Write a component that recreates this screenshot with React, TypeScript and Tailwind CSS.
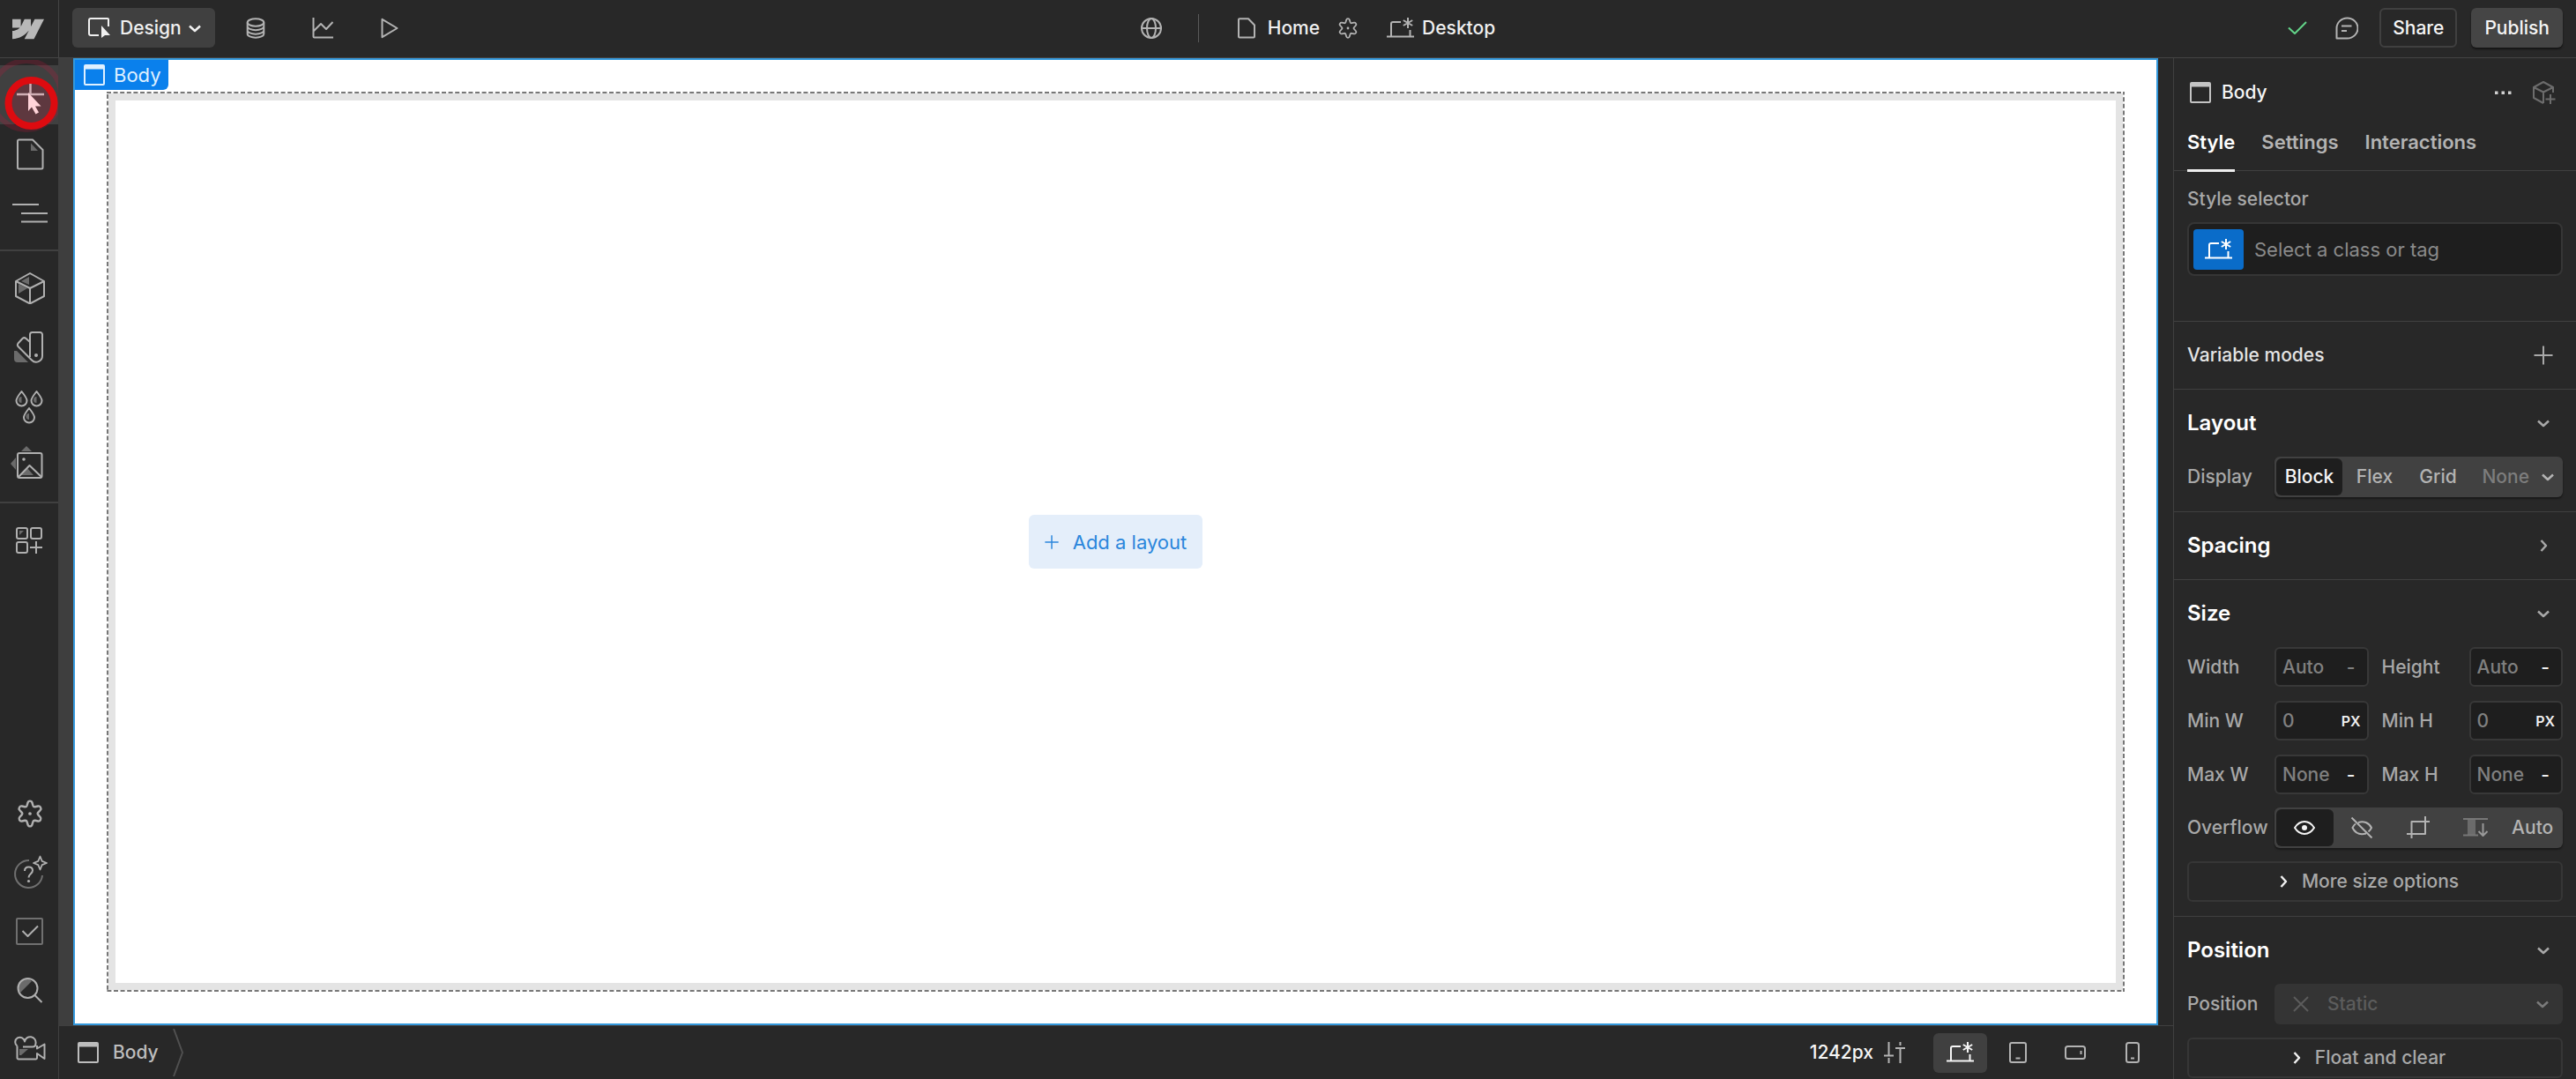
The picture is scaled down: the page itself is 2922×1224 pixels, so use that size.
import { useState } from "react";
import type { ReactNode } from "react";

type IconProps = { className?: string };

function Svg({ box, className, children }: { box: string; className: string; children: ReactNode }) {
  return (
    <svg
      viewBox={box}
      className={`shrink-0 ${className}`}
      fill="none"
      stroke="currentColor"
      strokeWidth={2}
      strokeLinejoin="round"
      aria-hidden="true"
    >
      {children}
    </svg>
  );
}

const LogoIcon = () => (
  <svg viewBox="0 0 24 24" className="h-9 w-9" fill="currentColor" aria-hidden="true">
    <path d="m24 4.515-7.658 14.97H9.149l3.205-6.204h-.144C9.566 16.713 5.621 18.973 0 19.485v-6.118s3.596-.213 5.71-2.435H0V4.515h6.417v5.278l.144-.001 2.622-5.277h4.854v5.244h.144l2.72-5.244H24Z" />
  </svg>
);

const DesignIcon = () => (
  <Svg box="0 0 26 24" className="h-6 w-[26px]">
    <path d="M12 20H3a2 2 0 0 1-2-2V3a2 2 0 0 1 2-2h19a1 1 0 0 1 1 1v8" />
    <path d="M15 9v14l4-3h6z" fill="currentColor" stroke="none" />
  </Svg>
);

const ChevronDown = ({ className = "" }: IconProps) => (
  <Svg box="0 0 14 14" className={`h-3.5 w-3.5 ${className}`}>
    <path d="M1 4.5 7 10l6-5.5" strokeWidth={2.5} />
  </Svg>
);

const ChevronRight = ({ className = "" }: IconProps) => (
  <Svg box="0 0 14 14" className={`h-3.5 w-3.5 ${className}`}>
    <path d="m4.5 1 5.5 6-5.5 6" strokeWidth={2.5} />
  </Svg>
);

const DatabaseIcon = () => (
  <Svg box="0 0 22 24" className="h-6 w-[22px]">
    <ellipse cx="11" cy="5.5" rx="9.3" ry="4.2" />
    <path d="M1.7 5.5v13c0 2.3 4.2 4.2 9.3 4.2s9.3-1.9 9.3-4.2v-13M1.7 10c0 2.3 4.2 4.2 9.3 4.2s9.3-1.9 9.3-4.2M1.7 14.5c0 2.3 4.2 4.2 9.3 4.2s9.3-1.9 9.3-4.2" />
  </Svg>
);

const ChartIcon = () => (
  <Svg box="0 0 24 24" className="h-6 w-6">
    <path d="M1.5 0v21.5a1 1 0 0 0 1 1H24M2 15l8-8 6 6 7.5-8" />
  </Svg>
);

const PlayIcon = () => (
  <Svg box="0 0 22 24" className="h-6 w-[22px]">
    <path d="M2.5 1.8v20.4l17-10.200z" />
  </Svg>
);

const GlobeIcon = () => (
  <Svg box="0 0 26 26" className="h-[26px] w-[26px]">
    <circle cx="13" cy="13" r="11" />
    <ellipse cx="13" cy="13" rx="5" ry="11" />
    <path d="M2 13h22" />
  </Svg>
);

const PageIcon = () => (
  <Svg box="0 0 20 24" className="h-6 w-5">
    <path d="M2 1.2h10l7 7.3v13a1 1 0 0 1-1 1H2a1 1 0 0 1-1-1V2.2a1 1 0 0 1 1-1z" />
  </Svg>
);

const GearIcon = ({ className = "" }: IconProps) => (
  <Svg box="0 0 24 24" className={className}>
    <path
      d="M10.2 2.6Q10.500 1.200 12 1.200t1.800 1.400l.8 2.600q.4 1.200 1.700 1l2.600-.6q1.300-.3 2.100 1t-.2 2.400l-1.800 2q-.9 1 0 2l1.800 2q1 1.100.2 2.400t-2.100 1l-2.600-.6q-1.300-.2-1.700 1l-.8 2.600Q13.500 22.800 12 22.800t-1.800-1.400l-.8-2.600q-.4-1.200-1.700-1l-2.600.6q-1.300.3-2.100-1t.2-2.400l1.800-2q.9-1 0-2l-1.800-2q-1-1.100-.2-2.400t2.100-1l2.600.6q1.300.2 1.700-1z"
      strokeWidth={1.8}
    />
    <circle cx="12" cy="12" r="1.400" fill="currentColor" stroke="none" />
  </Svg>
);

const BreakpointIcon = ({ className = "" }: IconProps) => (
  <Svg box="0 0 32 24" className={`h-6 w-8 ${className}`}>
    <path d="M0 21.5h31M5 21V7a2 2 0 0 1 2-2h9M26.500 14v7" />
    <path d="M24 0v12M18.800 3l10.400 6M29.200 3 18.800 9" />
  </Svg>
);

const CheckIcon = ({ className = "" }: IconProps) => (
  <Svg box="0 0 22 22" className={className}>
    <path d="m1 10.500 7 6.500L21 4" />
  </Svg>
);

const CommentIcon = () => (
  <Svg box="0 0 26 26" className="h-[26px] w-[26px]">
    <path d="M1.5 24.5V13A12 11.500 0 1 1 13.500 24.500z" />
    <path d="M7 10.5h11.5M7 16h6" />
  </Svg>
);

const BodyIcon = () => (
  <Svg box="0 0 24 24" className="h-6 w-6">
    <rect x="1" y="1" width="22" height="22" rx="1" />
    <path d="M1 1h22v4.500H1z" fill="currentColor" stroke="none" />
  </Svg>
);

const PagesIcon = () => (
  <Svg box="0 0 36 36" className="h-9 w-9">
    <path d="M19 5.500V14h8z" fill="#6b6b6b" stroke="none" />
    <path d="M5.500 1.500H21L32.500 13v20a1.500 1.500 0 0 1-1.500 1.500H5.500A1.500 1.500 0 0 1 4 33V3a1.500 1.500 0 0 1 1.500-1.500z" />
  </Svg>
);

const NavigatorIcon = () => (
  <Svg box="0 0 40 36" className="h-9 w-10">
    <path d="M0 8h30M10 18h30M10 27.500h30" />
  </Svg>
);

const CubeIcon = () => (
  <Svg box="0 0 36 36" className="h-9 w-9">
    <path d="M17 5v9L8 10zM5 13l10 5-10 6z" fill="#6b6b6b" stroke="none" />
    <path d="M18 1 34 10v17l-16 8.500L2 27V10zM2 10l16 8 16-8M18 18v17" />
  </Svg>
);

const SwatchIcon = () => (
  <Svg box="0 0 36 36" className="h-9 w-9">
    <path d="M0 22h3l13 13H4a4 4 0 0 1-4-4z" fill="#6b6b6b" stroke="none" />
    <path d="M18 3.500A2.500 2.500 0 0 1 20.500 1h9A2.500 2.500 0 0 1 32 3.500V27.500a7 7 0 0 1-12 5L4.500 17a3 3 0 0 1 0-3.500l5-5.500a3 3 0 0 1 4 0l4.500 4zM18 12v17" />
    <circle cx="25" cy="27" r="2" fill="currentColor" stroke="none" />
  </Svg>
);

const DropsIcon = () => (
  <Svg box="0 0 36 40" className="h-10 w-9">
    <path d="M8.500 3c4 5 6 7.500 6 10.500a6 6 0 0 1-12 0C2.500 10.500 4.500 8 8.500 3zM25.500 3c4 5 6 7.500 6 10.500a6 6 0 0 1-12 0c0-3 2-5.500 6-10.500zM17 22c4 5 6 7.500 6 10.500a6 6 0 0 1-12 0c0-3 2-5.500 6-10.500z" />
    <path d="M8.500 9v7a3 3 0 0 1 0-7zM25.500 9v7a3 3 0 0 1 0-7zM17 28v7a3 3 0 0 1 0-7z" fill="#6b6b6b" stroke="none" />
  </Svg>
);

const AssetsIcon = () => (
  <Svg box="3 3 42 40" className="h-10 w-[42px] overflow-visible">
    <path d="M14 7 20 1l6 6zM8 14v14l-6-7zM21 26l7 8H14z" fill="#6b6b6b" stroke="none" />
    <rect x="10" y="9" width="27.500" height="28" rx="2" />
    <path d="m11 36 12.500-13L37 36" />
    <circle cx="17" cy="16" r="1.800" fill="currentColor" stroke="none" />
  </Svg>
);

const AppsIcon = () => (
  <Svg box="0 0 36 36" className="h-9 w-9">
    <rect x="3" y="4" width="12" height="12" rx="2" />
    <rect x="19" y="4" width="12" height="12" rx="2" />
    <rect x="3" y="20" width="12" height="12" rx="2" />
    <path d="M25 19v14M18 26h14" />
    <path d="M6 7h5l-5 5z" fill="#6b6b6b" stroke="none" />
  </Svg>
);

const HelpIcon = () => (
  <Svg box="0 0 40 40" className="h-10 w-10">
    <path d="M19 6a15.500 15.500 0 1 0 15 17" stroke="#707070" />
    <path d="M14 18c0-3 2-4.500 4.500-4.500S23 15 23 17.500c0 3.500-4.500 4-4.500 8" />
    <circle cx="18.500" cy="29.500" r="1.600" fill="currentColor" stroke="none" />
    <path d="m31.500 1.500 2.200 5.300L39 9l-5.300 2.200-2.200 5.300-2.200-5.300L24 9l5.300-2.200z" strokeWidth={1.8} />
  </Svg>
);

const AuditIcon = () => (
  <Svg box="0 0 36 36" className="h-9 w-9">
    <rect x="3" y="3" width="29" height="29" rx="1" stroke="#707070" />
    <path d="m9.500 17 6 6L27 11.500" />
  </Svg>
);

const SearchIcon = () => (
  <Svg box="0 0 36 36" className="h-9 w-9">
    <path d="M7 20 20 7a9 9 0 0 0-13 13z" fill="#6b6b6b" stroke="none" />
    <circle cx="15.500" cy="15" r="11" />
    <path d="m23.500 23 8 8" />
  </Svg>
);

const CameraIcon = () => (
  <Svg box="0 0 36 32" className="h-8 w-9">
    <path d="M6 15h10l-8 7H6z" fill="#6b6b6b" stroke="none" />
    <path d="M3.500 11.500v13.500a1.500 1.500 0 0 0 1.500 1.500h19.500a1.500 1.500 0 0 0 1.500-1.500v-5l8.500 6V9.500l-8.500 5v-3.500" />
    <path d="M3.500 11.500A5.400 5.400 0 1 1 12 6.500a6 6 0 1 1 12.500 2c0 2-1 4-3.500 4H10" />
  </Svg>
);

const MoreIcon = () => (
  <Svg box="0 0 24 24" className="h-6 w-6">
    <path d="M2 10.500h3.500V14H2zM9.500 10.500H13V14H9.500zM17 10.500h3.500V14H17z" fill="currentColor" stroke="none" />
  </Svg>
);

const CubePlusIcon = () => (
  <Svg box="0 0 28 28" className="h-7 w-7">
    <path d="M13 26 2 20V8l11-6 11 6v6M2 8l11 5.500L24 8M13 13.500V26M21 16v11M15.500 21.500h11" />
  </Svg>
);

const PlusIcon = ({ className = "" }: IconProps) => (
  <Svg box="0 0 22 22" className={className}>
    <path d="M11 .5v21M.5 11h21" />
  </Svg>
);

const EyeIcon = () => (
  <Svg box="0 0 26 24" className="h-6 w-[26px]">
    <path d="M2 12c3-4.800 6.500-7 11-7s8 2.200 11 7c-3 4.800-6.500 7-11 7S5 16.800 2 12z" />
    <circle cx="13" cy="12" r="3" fill="currentColor" stroke="none" />
  </Svg>
);

const EyeOffIcon = () => (
  <Svg box="0 0 26 24" className="h-6 w-[26px]">
    <path d="M9 6c6-2 12 0 15 6-1 2-2 3.500-3.500 4.500M18 18.500C11 20.500 5.500 18 2.500 12 3.500 10 4.500 8.500 6 7.500M1.500.5l23 23" />
  </Svg>
);

const CropIcon = () => (
  <Svg box="0 0 26 26" className="h-[26px] w-[26px]">
    <path d="M5.500 25V6H26M0 20h21V0" />
  </Svg>
);

const ScrollIcon = () => (
  <Svg box="0 0 28 24" className="h-6 w-7">
    <path d="M5 3h9v17H5z" fill="#6b6b6b" stroke="none" />
    <path d="M0 2h28M0 20.500h17" stroke="#777" />
    <path d="M22.500 7v14M17.500 16l5 5 5-5" stroke="#999" />
  </Svg>
);

const SlidersIcon = () => (
  <Svg box="0 0 24 24" className="h-6 w-6">
    <path d="M5.500 0v15M0 15.500h11M5.500 18v6M18.500 0v4M13 7h11M18.500 7v17" />
  </Svg>
);

const TabletIcon = () => (
  <Svg box="0 0 24 24" className="h-6 w-6">
    <rect x="3" y="1" width="18" height="22" rx="2" />
    <path d="M9.500 18.500h5" />
  </Svg>
);

const LandscapeIcon = () => (
  <Svg box="0 0 24 24" className="h-6 w-6">
    <rect x="1" y="5" width="22" height="14" rx="2.500" />
    <path d="M18.500 10v4" />
  </Svg>
);

const PhoneIcon = () => (
  <Svg box="0 0 24 24" className="h-6 w-6">
    <rect x="5" y="1" width="14" height="22" rx="2.500" />
    <path d="M10 18.500h4" />
  </Svg>
);

const CloseIcon = () => (
  <Svg box="0 0 18 18" className="h-[18px] w-[18px]">
    <path d="m1 1 16 16M17 1 1 17" />
  </Svg>
);

type RailItem = { label: string; icon: ReactNode };

const railGroups: RailItem[][] = [
  [
    { label: "Add elements", icon: <ClickedAddIcon /> },
    { label: "Pages", icon: <PagesIcon /> },
    { label: "Navigator", icon: <NavigatorIcon /> },
  ],
  [
    { label: "Components", icon: <CubeIcon /> },
    { label: "Variables", icon: <SwatchIcon /> },
    { label: "Style selectors", icon: <DropsIcon /> },
    { label: "Assets", icon: <AssetsIcon /> },
  ],
  [{ label: "Apps", icon: <AppsIcon /> }],
];

const railFooter: RailItem[] = [
  { label: "Settings", icon: <GearIcon className="h-8 w-8" /> },
  { label: "Help", icon: <HelpIcon /> },
  { label: "Audit", icon: <AuditIcon /> },
  { label: "Search", icon: <SearchIcon /> },
  { label: "Video tutorials", icon: <CameraIcon /> },
];

const tabs = ["Style", "Settings", "Interactions"];

const sizeFields = [
  { label: "Width", placeholder: "Auto", unit: "-", muted: true },
  { label: "Height", placeholder: "Auto", unit: "-" },
  { label: "Min W", placeholder: "0", unit: "PX" },
  { label: "Min H", placeholder: "0", unit: "PX" },
  { label: "Max W", placeholder: "None", unit: "-" },
  { label: "Max H", placeholder: "None", unit: "-" },
];

const overflowOptions = [
  { label: "Visible", icon: <EyeIcon /> },
  { label: "Hidden", icon: <EyeOffIcon /> },
  { label: "Clip", icon: <CropIcon /> },
  { label: "Scroll", icon: <ScrollIcon /> },
  { label: "Auto", icon: "Auto" },
];

const devices = [
  { label: "Desktop", icon: <BreakpointIcon /> },
  { label: "Tablet", icon: <TabletIcon /> },
  { label: "Mobile landscape", icon: <LandscapeIcon /> },
  { label: "Mobile portrait", icon: <PhoneIcon /> },
];

function TopBar() {
  return (
    <header className="flex h-[66px] shrink-0 border-b border-[#444]">
      <a href="#" aria-label="Dashboard" className="flex w-[67px] shrink-0 items-center justify-center border-r border-[#444] pr-0.5 text-[#b8b8b8]">
        <LogoIcon />
      </a>
      <div className="grid flex-1 grid-cols-[1fr_auto_1fr] items-center px-[15px] pb-0.5 text-[#b3b3b3]">
        <div className="flex items-center">
          <button type="button" className="flex h-[45px] items-center rounded-md bg-[#404040] pl-[18px] pr-4 text-[#f0f0f0]">
            <DesignIcon />
            <span className="ml-2.5 mr-2">Design</span>
            <ChevronDown />
          </button>
          <button type="button" aria-label="CMS" className="ml-2 flex h-11 w-[76px] items-center justify-center"><DatabaseIcon /></button>
          <button type="button" aria-label="Insights" className="flex h-11 w-[76px] items-center justify-center"><ChartIcon /></button>
          <button type="button" aria-label="Preview" className="flex h-11 w-[76px] items-center justify-center"><PlayIcon /></button>
        </div>
        <div className="flex items-center">
          <button type="button" aria-label="Locale"><GlobeIcon /></button>
          <span className="ml-10 mr-11 h-8 w-px bg-[#5a5a5a]" />
          <button type="button" className="flex items-center gap-3.5">
            <PageIcon />
            <span className="text-[#f0f0f0]">Home</span>
          </button>
          <button type="button" aria-label="Page settings" className="mx-5"><GearIcon className="h-6 w-6" /></button>
          <button type="button" className="ml-3 flex items-center gap-2">
            <BreakpointIcon />
            <span className="text-[#f0f0f0]">Desktop</span>
          </button>
        </div>
        <div className="flex items-center justify-end">
          <CheckIcon className="mr-8 h-[22px] w-[22px] text-[#63d489]" />
          <button type="button" aria-label="Comments" className="mr-6"><CommentIcon /></button>
          <button type="button" className="mr-4 h-[45px] rounded-md border-2 border-[#404040] px-[13px] text-[#f5f5f5]">Share</button>
          <button type="button" className="h-[45px] rounded-md bg-[#454545] px-[15px] text-[#f5f5f5] shadow-[0_2px_2px_rgba(0,0,0,0.5)]">Publish</button>
        </div>
      </div>
    </header>
  );
}

function RailButton({ item, active = false }: { item: RailItem; active?: boolean }) {
  return (
    <button
      type="button"
      aria-label={item.label}
      className={`relative flex h-[67px] w-full items-center justify-center pl-0.5 ${active ? "bg-[#404040]" : ""}`}
    >
      {item.icon}
    </button>
  );
}

// Plus sign with the click ring and the pointer drawn over it
function ClickedAddIcon() {
  return (
    <svg viewBox="0 0 66 82" className="pointer-events-none absolute left-0 top-[-6px] h-[82px] w-[66px]" aria-hidden="true">
      <circle cx="30" cy="40" r="39" fill="none" stroke="#c8103c" strokeOpacity={0.22} strokeWidth={6} />
      <circle cx="35.500" cy="49" r="26" fill="#ff1040" fillOpacity={0.16} stroke="#dd0b10" strokeWidth={8} />
      <path d="M19 39h31M34.500 27v13" stroke="#d0aeb4" strokeWidth={2.500} />
      <path d="M32 37v21l4-4.500 4.500 8 3.500-2-4-7h6.500z" fill="#ffd3d9" />
    </svg>
  );
}

function Rail() {
  return (
    <nav aria-label="Tools" className="flex w-[66px] shrink-0 flex-col text-[#b0b0b0]">
      {railGroups.map((group, i) => (
        <div key={i} className={`py-2 ${i > 0 ? "border-t-2 border-[#404040]" : ""}`}>
          {group.map((item) => (
            <RailButton key={item.label} item={item} active={item.label === "Add elements"} />
          ))}
        </div>
      ))}
      <div className="mt-auto">
        {railFooter.map((item) => (
          <RailButton key={item.label} item={item} />
        ))}
      </div>
    </nav>
  );
}

function Canvas() {
  return (
    <main className="flex min-h-0 flex-1 bg-[#282828] pr-[17px] font-normal text-[22px]">
      <div className="w-[17px] shrink-0 bg-[#3e3e3e]" />
      <div className="relative flex-1 border-2 border-[#3398dc] bg-white p-9">
        <div className="absolute left-0 top-0 flex h-[34px] items-center gap-2.5 rounded-br-md bg-[#0a80ec] pl-2.5 pr-2 text-[#dff0ff]">
          <BodyIcon />
          Body
        </div>
        <div className="relative flex h-full items-center justify-center border-10 border-[#e4e4e4]">
          <svg className="pointer-events-none absolute -left-2.5 -top-2.5 h-[calc(100%+20px)] w-[calc(100%+20px)]" aria-hidden="true">
            <rect width="100%" height="100%" fill="none" stroke="#fff" strokeWidth={4} />
            <rect width="100%" height="100%" fill="none" stroke="#777" strokeWidth={4} strokeDasharray="5 2.600" />
          </svg>
          <button type="button" className="flex h-[61px] items-center gap-4 rounded-md bg-[#e4eefa] px-[18px] text-[#2b86dc]">
            <PlusIcon className="h-4 w-4" />
            Add a layout
          </button>
        </div>
      </div>
    </main>
  );
}

function BottomBar() {
  const [device, setDevice] = useState("Desktop");

  return (
    <footer className="flex h-[61px] shrink-0 items-center border-l border-t border-[#404040] pl-[21px] pr-4 text-[#b3b3b3]">
      <button type="button" className="flex items-center gap-4 text-[#bdbdbd]">
        <BodyIcon />
        Body
      </button>
      <Svg box="0 0 12 54" className="ml-4 h-[54px] w-3 text-[#505050]">
        <path d="M1 0 11 27 1 54" />
      </Svg>
      <button type="button" className="ml-auto mr-8 flex items-center gap-3">
        <span className="text-[#f5f5f5]">1242px</span>
        <SlidersIcon />
      </button>
      <div className="flex gap-1">
        {devices.map((d) => (
          <button
            key={d.label}
            type="button"
            aria-label={d.label}
            onClick={() => setDevice(d.label)}
            className={`flex h-[45px] w-[61px] items-center justify-center rounded-md ${
              device === d.label ? "bg-[#404040] text-[#f5f5f5]" : ""
            }`}
          >
            {d.icon}
          </button>
        ))}
      </div>
    </footer>
  );
}

function Section({ title, open = true, children }: { title: string; open?: boolean; children?: ReactNode }) {
  return (
    <section className="border-t border-[#404040]">
      <button type="button" aria-expanded={open} className="flex h-[76px] w-full items-center justify-between pl-[15px] pr-[30px]">
        <span className="text-2xl font-semibold text-white">{title}</span>
        {open ? <ChevronDown /> : <ChevronRight />}
      </button>
      {children && <div className="flex flex-col gap-[15px] px-[15px] pb-4">{children}</div>}
    </section>
  );
}

type SizeFieldProps = { label: string; placeholder: string; unit: string; muted?: boolean };

function SizeField({ label, placeholder, unit, muted }: SizeFieldProps) {
  const id = label.toLowerCase().replace(" ", "-");
  return (
    <div className="flex items-center">
      <label htmlFor={id} className="w-[99px] shrink-0">{label}</label>
      <div className="flex h-[45px] min-w-0 flex-1 items-center rounded-md border-2 border-[#383838] bg-[#1e1e1e] px-[7px]">
        <input id={id} placeholder={placeholder} className="w-full min-w-0 bg-transparent outline-none placeholder:text-[#808080]" />
        <button
          type="button"
          aria-label={`${label} unit`}
          className={`shrink-0 ${muted ? "text-[#808080]" : "text-[#f0f0f0]"} ${unit === "PX" ? "text-base font-semibold" : "pr-1.5"}`}
        >
          {unit}
        </button>
      </div>
    </div>
  );
}

function MoreButton({ children }: { children: ReactNode }) {
  return (
    <button type="button" className="flex h-[46px] w-full items-center justify-center gap-3.5 rounded-md border-2 border-[#363636] pr-4">
      <ChevronRight className="text-[#f0f0f0]" />
      {children}
    </button>
  );
}

function StylePanel() {
  const [tab, setTab] = useState("Style");
  const [overflow, setOverflow] = useState("Visible");

  return (
    <aside className="flex w-[457px] shrink-0 flex-col overflow-hidden border-l border-[#404040] text-[#a8a8a8]">
      <div className="flex h-[77px] shrink-0 items-center pl-[18px] pr-[22px]">
        <span className="flex items-center gap-3 text-[#f5f5f5]">
          <span className="flex text-[#c4c4c4]"><BodyIcon /></span>
          Body
        </span>
        <button type="button" aria-label="More options" className="ml-auto text-[#d0d0d0]"><MoreIcon /></button>
        <button type="button" aria-label="Create component" className="ml-5 text-[#6c6c6c]"><CubePlusIcon /></button>
      </div>
      <div role="tablist" className="flex h-[51px] shrink-0 gap-[30px] border-b border-[#404040] pl-[15px] text-[22px]">
        {tabs.map((name) => (
          <button
            key={name}
            type="button"
            role="tab"
            aria-selected={tab === name}
            onClick={() => setTab(name)}
            className={`-mb-0.5 border-b-3 pb-3.5 font-semibold ${tab === name ? "border-[#eee] text-white" : "border-transparent text-[#b3b3b3]"}`}
          >
            {name}
          </button>
        ))}
      </div>

      <div className="h-[170px] shrink-0 px-[15px] pt-[18px]">
        <label htmlFor="selector" className="block h-10 leading-7">Style selector</label>
        <div className="flex h-[61px] items-center rounded-lg border-2 border-[#363636] bg-[#1e1e1e] pl-[5px]">
          <button type="button" aria-label="Inherited selectors" className="flex h-[46px] w-[57px] shrink-0 items-center justify-center rounded-sm bg-[#0a6cc9] text-white">
            <BreakpointIcon />
          </button>
          <input
            id="selector"
            placeholder="Select a class or tag"
            className="min-w-0 flex-1 bg-transparent px-3 text-[22px] font-normal outline-none placeholder:text-[#8a8a8a]"
          />
        </div>
      </div>

      <div className="flex h-[77px] shrink-0 items-center justify-between border-t border-[#404040] pl-[15px] pr-[26px]">
        <span className="text-[#e4e4e4]">Variable modes</span>
        <button type="button" aria-label="Add variable mode"><PlusIcon className="h-[22px] w-[22px]" /></button>
      </div>

      <Section title="Layout">
        <div className="flex items-center">
          <span className="w-[99px] shrink-0">Display</span>
          <div className="flex h-[46px] flex-1 rounded-md bg-[#414141] p-0.5 text-[#b3b3b3] shadow-[0_2px_2px_rgba(0,0,0,0.4)]">
            <button type="button" className="w-[75px] rounded-md bg-[#1e1e1e] text-[#f5f5f5]">Block</button>
            <button type="button" className="w-[73px]">Flex</button>
            <button type="button" className="w-[71px]">Grid</button>
            <button type="button" className="flex flex-1 items-center justify-end gap-3.5 pr-2">
              <span className="text-[#7d7d7d]">None</span>
              <ChevronDown />
            </button>
          </div>
        </div>
      </Section>

      <Section title="Spacing" open={false} />

      <Section title="Size">
        <div className="grid grid-cols-2 gap-x-[15px] gap-y-4">
          {sizeFields.map((f) => (
            <SizeField key={f.label} {...f} />
          ))}
        </div>
        <div className="flex items-center">
          <span className="w-[99px] shrink-0">Overflow</span>
          <div className="grid h-[46px] flex-1 grid-cols-5 rounded-md bg-[#414141] p-0.5 text-[#b3b3b3] shadow-[0_2px_2px_rgba(0,0,0,0.4)]">
            {overflowOptions.map((o) => (
              <button
                key={o.label}
                type="button"
                aria-label={o.label}
                onClick={() => setOverflow(o.label)}
                className={`flex items-center justify-center rounded-md ${overflow === o.label ? "bg-[#1e1e1e] text-[#f5f5f5]" : ""}`}
              >
                {o.icon}
              </button>
            ))}
          </div>
        </div>
        <MoreButton>More size options</MoreButton>
      </Section>

      <Section title="Position">
        <div className="flex items-center">
          <span className="w-[99px] shrink-0">Position</span>
          <button type="button" disabled className="flex h-[46px] flex-1 items-center rounded-md bg-[#343434] pl-[21px] pr-4 text-[#5c5c5c]">
            <CloseIcon />
            <span className="ml-[21px] mr-auto">Static</span>
            <ChevronDown className="text-[#7a7a7a]" />
          </button>
        </div>
        <MoreButton>Float and clear</MoreButton>
      </Section>
    </aside>
  );
}

export default function App() {
  return (
    <div className="flex h-screen flex-col overflow-hidden bg-[#282828] font-['Inter',sans-serif] text-[21px] font-medium leading-7">
      <TopBar />
      <div className="flex min-h-0 flex-1">
        <Rail />
        <div className="flex min-w-0 flex-1 flex-col">
          <Canvas />
          <BottomBar />
        </div>
        <StylePanel />
      </div>
    </div>
  );
}
